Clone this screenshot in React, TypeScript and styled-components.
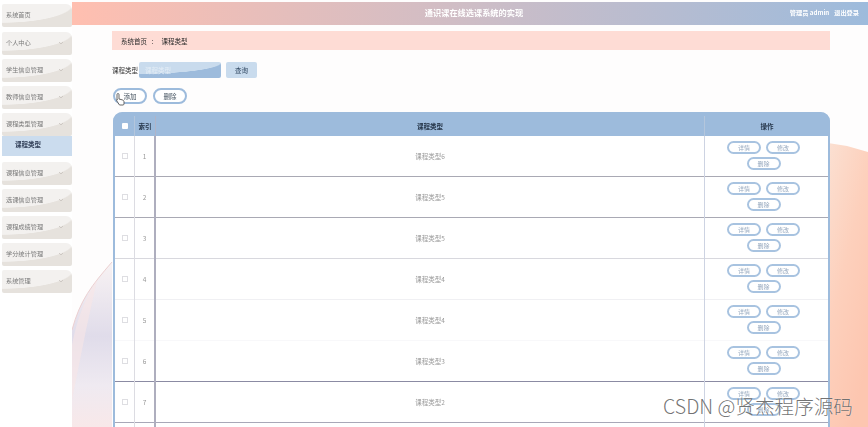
import React from "react";
import styled, { createGlobalStyle } from "styled-components";

const Global = createGlobalStyle`
  html, body { margin: 0; padding: 0; background: #fff; overflow: hidden; }
  * { box-sizing: border-box; }
  body { font-family: "Noto Sans CJK SC", "Liberation Sans", sans-serif; }
`;

const Frame = styled.div`
  position: relative;
  width: 868px;
  height: 427px;
  overflow: hidden;
`;

const Page = styled.div`
  display: flex;
  width: 868px;
  height: 427px;
  overflow: hidden;
  filter: blur(0.5px);
  background: #fff;
`;

const Sidebar = styled.nav`
  width: 72px;
  flex: none;
  padding: 4px 0 0 2px;
  display: flex;
  flex-direction: column;
  background: #fff;
`;

const MenuItem = styled.div<{ $gap: number }>`
  height: 23px;
  margin-bottom: ${(p) => p.$gap}px;
  display: flex;
  align-items: center;
  justify-content: space-between;
  padding: 0 8px 2px 4px;
  font-size: 6.2px;
  color: #7a7a7a;
  border-radius: 2px 6px 2px 2px;
  background:
    radial-gradient(ellipse 72px 19px at 0 0, #f3f1ef 0 97%, transparent 100%),
    #e6e2dd;
`;

const Chevron = styled.svg`
  width: 6px;
  height: 6px;
  fill: none;
  stroke: #c6c2bc;
  stroke-width: 0.8;
`;

const SubItem = styled.div`
  height: 20px;
  margin: 0 0 6px;
  padding: 0 0 4px 13px;
  display: flex;
  align-items: center;
  font-size: 6.5px;
  font-weight: 700;
  color: #33415a;
  background: #cbdcee;
`;

const Main = styled.main`
  position: relative;
  flex: 1;
  min-width: 0;
  padding-top: 2px;
  display: flex;
  flex-direction: column;
`;

const Art = styled.svg`
  position: absolute;
  left: 0;
  top: 0;
  width: 796px;
  height: 427px;
`;

const Header = styled.header`
  position: relative;
  height: 23px;
  flex: none;
  display: flex;
  align-items: center;
  justify-content: center;
  padding-left: 8px;
  background: linear-gradient(90deg, #ffbfb0 0%, #9dbbdc 100%);
`;

const Title = styled.h1`
  margin: 0 0 2px;
  font-size: 8.2px;
  line-height: 1;
  font-weight: 700;
  color: #fff;
`;

const UserBox = styled.div`
  position: absolute;
  right: 9px;
  top: 6px;
  display: flex;
  gap: 5px;
  font-size: 6.2px;
  line-height: 10px;
  font-weight: 700;
  color: #fff;
`;

const Content = styled.div`
  position: relative;
  padding: 6px 38px 0 40px;
  display: flex;
  flex-direction: column;
`;

const Crumb = styled.div`
  height: 19px;
  padding-left: 9px;
  display: flex;
  align-items: center;
  gap: 4px;
  font-size: 6.5px;
  color: #2a2a2a;
  background: #fedcd5;
`;

const SearchRow = styled.div`
  margin-top: 12px;
  height: 16px;
  display: flex;
  align-items: center;
`;

const SearchLabel = styled.span`
  width: 27px;
  font-size: 6.5px;
  color: #333;
`;

const SearchInput = styled.div`
  width: 82px;
  height: 16px;
  padding-left: 6px;
  display: flex;
  align-items: center;
  font-size: 6.5px;
  color: #e4edf6;
  border-radius: 2px;
  background:
    radial-gradient(ellipse 84px 12px at 0 0, #c9dbed 0 97%, transparent 100%),
    #9dbbdc;
`;

const SearchButton = styled.div`
  width: 31px;
  height: 16px;
  margin-left: 5px;
  display: flex;
  align-items: center;
  justify-content: center;
  font-size: 6.5px;
  color: #2f4660;
  border-radius: 2px;
  background: #c9dbed;
`;

const Actions = styled.div`
  margin-top: 10px;
  display: flex;
  gap: 6px;
  padding-left: 1px;
`;

const PillBig = styled.div`
  width: 34px;
  height: 16px;
  display: flex;
  align-items: center;
  justify-content: center;
  font-size: 6.5px;
  color: #44525f;
  background: #fff;
  border: 2px solid #9dbbdc;
  border-radius: 8px;
`;

const Table = styled.div`
  margin-top: 8px;
  margin-left: 1px;
  width: 717px;
  background: #fff;
  border-left: 2px solid #9dbbdc;
  border-right: 2px solid #9dbbdc;
  border-radius: 10px 10px 0 0;
`;

const Grid = styled.div`
  display: grid;
  grid-template-columns: 20px 21px 549px 1fr;
`;

const HeadRow = styled(Grid)`
  height: 24px;
  margin: 0 -2px;
  background: #9dbbdc;
  border-radius: 9px 9px 0 0;
  padding-left: 2px;
`;

const HeadCell = styled.div<{ $line?: string }>`
  display: flex;
  align-items: center;
  justify-content: center;
  font-size: 6.5px;
  font-weight: 700;
  color: #26364a;
  margin-top: 4px;
  border-right: 1px solid ${(p) => p.$line || "transparent"};
`;

const HeadBox = styled.span`
  width: 6px;
  height: 6px;
  background: #fff;
  border-radius: 1px;
`;

const Row = styled(Grid)<{ $line: string }>`
  height: 41px;
  box-shadow: inset 0 -1px 0 ${(p) => p.$line};
`;

const Cell = styled.div<{ $line?: string; $w?: number }>`
  display: flex;
  align-items: center;
  justify-content: center;
  padding-bottom: 2px;
  font-size: 6.5px;
  color: #9a9a9a;
  border-right: ${(p) => p.$w || 1}px solid ${(p) => p.$line || "transparent"};
`;

const Box = styled.span`
  width: 6px;
  height: 6px;
  border: 1px solid #dedee2;
`;

const ActionCell = styled.div`
  display: flex;
  flex-wrap: wrap;
  align-content: flex-start;
  justify-content: center;
  gap: 3px 5px;
  padding: 5px 25px 0 19px;
`;

const Pill = styled.div`
  width: 34px;
  height: 13px;
  display: flex;
  align-items: center;
  justify-content: center;
  font-size: 6px;
  color: #97a9bf;
  background: #fff;
  border: 2px solid #a8c3e0;
  border-radius: 7px;
`;

const Cursor = styled.svg`
  position: absolute;
  left: 115px;
  top: 92px;
  width: 11px;
  height: 14px;
`;

const Watermark = styled.div`
  position: absolute;
  left: 663px;
  top: 394px;
  font-family: "Noto Sans CJK SC", sans-serif;
  font-size: 19.6px;
  line-height: 24px;
  font-weight: 300;
  color: rgba(90, 90, 90, 0.85);
  text-shadow: 0 0 1px rgba(255, 255, 255, 0.8);
  white-space: nowrap;
`;

const menu = [
  "系统首页",
  "个人中心",
  "学生信息管理",
  "教师信息管理",
  "课程类型管理",
  "课程信息管理",
  "选课信息管理",
  "课程成绩管理",
  "学分统计管理",
  "系统管理",
];

const rows = [
  { n: 1, name: "课程类型6", line: "#a9a9b4" },
  { n: 2, name: "课程类型5", line: "#a9a9b4" },
  { n: 3, name: "课程类型5", line: "#d8d8de" },
  { n: 4, name: "课程类型4", line: "#f0f0f3" },
  { n: 5, name: "课程类型4", line: "#f8f8fa" },
  { n: 6, name: "课程类型3", line: "#8b8ba3" },
  { n: 7, name: "课程类型2", line: "#a8a8b8" },
];

const gapAfter = (i: number) => (i === 4 ? 0 : i === 0 ? 5 : 4);

export default function App() {
  return (
    <Frame>
      <Global />
      <Page>
        <Sidebar>
          {menu.map((m, i) => (
            <React.Fragment key={m}>
              <MenuItem $gap={gapAfter(i)}>
                <span>{m}</span>
                {i > 0 && (
                  <Chevron viewBox="0 0 6 6">
                    <path d="M1 2l2 2 2-2" />
                  </Chevron>
                )}
              </MenuItem>
              {i === 4 && <SubItem>课程类型</SubItem>}
            </React.Fragment>
          ))}
        </Sidebar>
        <Main>
          <Art viewBox="0 0 796 427" preserveAspectRatio="none">
            <defs>
              <linearGradient id="peach" x1="0" y1="0" x2="0.6" y2="1">
                <stop offset="0" stopColor="#fbe0d2" />
                <stop offset="0.5" stopColor="#fdd0bc" />
                <stop offset="1" stopColor="#fdc6b0" />
              </linearGradient>
              <linearGradient id="lav" x1="0" y1="0" x2="0" y2="1">
                <stop offset="0" stopColor="#f8f2f3" />
                <stop offset="0.45" stopColor="#e0dcea" />
                <stop offset="0.75" stopColor="#efeaf1" />
                <stop offset="1" stopColor="#f8e8e9" />
              </linearGradient>
            </defs>
            <rect width="796" height="427" fill="#fefdfd" />
            <path d="M756 143 L775 146 L796 152 V427 H756Z" fill="url(#peach)" />
            <path d="M0 330 C8 300 20 285 40 262 V427 H0Z" fill="url(#lav)" />
            <path d="M0 330 C8 300 20 285 40 262" fill="none" stroke="#ecd0d1" strokeWidth="1" />
            <path d="M0 345 C5 320 12 300 25 280 L14 330 L0 400Z" fill="#f9e6e6" opacity="0.6" />
          </Art>
          <Header>
            <Title>通识课在线选课系统的实现</Title>
            <UserBox>
              <span>管理员 admin</span>
              <span>退出登录</span>
            </UserBox>
          </Header>
          <Content>
            <Crumb>
              <span>系统首页</span>
              <span>：</span>
              <span>课程类型</span>
            </Crumb>
            <SearchRow>
              <SearchLabel>课程类型</SearchLabel>
              <SearchInput>课程类型</SearchInput>
              <SearchButton>查询</SearchButton>
            </SearchRow>
            <Actions>
              <PillBig>添加</PillBig>
              <PillBig>删除</PillBig>
            </Actions>
            <Table>
              <HeadRow>
                <HeadCell $line="#b4c6dc">
                  <HeadBox />
                </HeadCell>
                <HeadCell $line="#b0b4c8">索引</HeadCell>
                <HeadCell $line="#b4c6dc">课程类型</HeadCell>
                <HeadCell>操作</HeadCell>
              </HeadRow>
              {rows.map((r) => (
                <Row key={r.n} $line={r.line}>
                  <Cell $line="#dcdce2">
                    <Box />
                  </Cell>
                  <Cell $line="#aeaebe" $w={2}>
                    {r.n}
                  </Cell>
                  <Cell $line="#cdd3e2">{r.name}</Cell>
                  <ActionCell>
                    <Pill>详情</Pill>
                    <Pill>修改</Pill>
                    <Pill>删除</Pill>
                  </ActionCell>
                </Row>
              ))}
              <Row $line="transparent">
                <Cell $line="#dcdce2" />
                <Cell $line="#aeaebe" $w={2} />
                <Cell $line="#cdd3e2" />
                <ActionCell />
              </Row>
            </Table>
          </Content>
        </Main>
      </Page>
      <Cursor viewBox="0 0 11 14">
        <path
          d="M3 1.5c.7 0 1 .5 1 1V7l3 .8c1.2.3 2 .9 2 2V12c0 .6-.5 1-1 1H4.5L1.5 8.5c-.4-.6.3-1.3 1-.8l-.5-.2V2.5c0-.5.3-1 1-1z"
          fill="#fff"
          stroke="#555"
          strokeWidth="0.9"
        />
      </Cursor>
      <Watermark>CSDN @贤杰程序源码</Watermark>
    </Frame>
  );
}
